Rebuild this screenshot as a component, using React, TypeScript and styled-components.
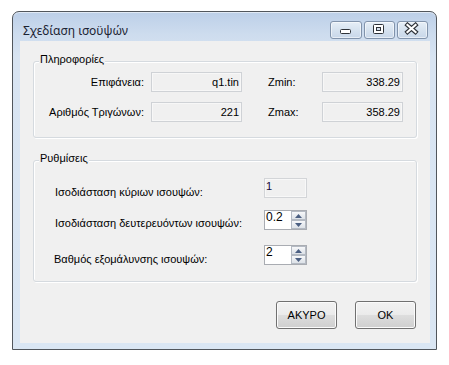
import React from "react";
import styled, { createGlobalStyle } from "styled-components";

const GlobalStyle = createGlobalStyle`
  html, body { margin: 0; padding: 0; background: #ffffff; }
  body {
    font-family: "Liberation Sans", Arial, sans-serif;
    font-size: 11px;
    color: #000;
  }
  * { box-sizing: border-box; }
`;

const Page = styled.div`
  padding: 11px 0 0 12px;
`;

const Window = styled.div`
  width: 425px;
  height: 339px;
  border: 1px solid #51565c;
  border-radius: 7px 7px 0 0;
  background: linear-gradient(180deg, #bccfe8 0px, #cddcee 22px, #d8e4f2 45px, #dae6f3 100%);
  box-shadow: inset 0 1px 0 rgba(255, 255, 255, 0.55);
  display: flex;
  flex-direction: column;
  padding: 0 6px 6px 7px;
`;

const TitleBar = styled.div`
  height: 29px;
  flex: none;
  display: flex;
  justify-content: space-between;
  align-items: flex-start;
`;

const Title = styled.div`
  padding: 11px 0 0 3px;
  font-family: "Noto Sans", "Open Sans", sans-serif;
  font-size: 12px;
  line-height: 16px;
  color: #1c2433;
  white-space: nowrap;
`;

const Captions = styled.div`
  display: flex;
  gap: 2px;
  margin: 9px 2px 0 0;
`;

const CapButton = styled.div<{ $w: number }>`
  width: ${(p) => p.$w}px;
  height: 18px;
  border: 1px solid #8193ab;
  border-radius: 3px;
  background: linear-gradient(180deg, #e6eef7 0%, #d6e2ef 50%, #c8d7e9 100%);
  box-shadow: inset 0 0 0 1px rgba(255, 255, 255, 0.55);
  display: flex;
  svg { display: block; }
`;

const Client = styled.div`
  flex: 1;
  background: #f0f0f0;
  padding: 20px 13px 0 13px;
  display: flex;
  flex-direction: column;
`;

const Group = styled.div<{ $h: number; $mt: number }>`
  position: relative;
  height: ${(p) => p.$h}px;
  margin-top: ${(p) => p.$mt}px;
  border: 1px solid #d5dadf;
  border-radius: 3px;
  box-shadow: inset 1px 1px 0 #ffffff, 1px 1px 0 #ffffff;
  flex: none;
`;

const Legend = styled.span`
  position: absolute;
  top: -9px;
  left: 5px;
  padding: 0 1px;
  background: #f0f0f0;
  line-height: 13px;
  white-space: nowrap;
`;

const InfoBody = styled.div`
  padding-top: 10px;
  display: flex;
  flex-direction: column;
  gap: 10px;
`;

const InfoRow = styled.div`
  display: flex;
  align-items: center;
  height: 20px;
`;

const Label = styled.span<{ $w: number; $align?: "left" | "right"; $ml?: number }>`
  flex: none;
  width: ${(p) => p.$w}px;
  margin-left: ${(p) => p.$ml ?? 0}px;
  text-align: ${(p) => p.$align ?? "left"};
  line-height: 13px;
  white-space: nowrap;
`;

const ReadBox = styled.div<{ $w: number; $ml?: number }>`
  flex: none;
  width: ${(p) => p.$w}px;
  height: 20px;
  margin-left: ${(p) => p.$ml ?? 0}px;
  border: 1px solid #cfd2d6;
  background: #f0f0f0;
  box-shadow: inset 0 0 0 1px #f7f7f7;
  text-align: right;
  padding: 0 2px;
  line-height: 18px;
  white-space: nowrap;
`;

const SettingsBody = styled.div`
  padding: 17px 0 0 21px;
  display: flex;
  flex-direction: column;
`;

const SettingRow = styled.div<{ $mt: number; $indent?: number }>`
  display: flex;
  align-items: flex-start;
  height: 20px;
  margin-top: ${(p) => p.$mt}px;
  margin-left: ${(p) => p.$indent ?? 0}px;
`;

const SettingLabel = styled.span<{ $w: number; $top: number }>`
  flex: none;
  width: ${(p) => p.$w}px;
  padding-top: ${(p) => p.$top}px;
  line-height: 13px;
  white-space: nowrap;
`;

const DisabledBox = styled.div`
  flex: none;
  width: 43px;
  height: 20px;
  border: 1px solid #d3d5d8;
  background: #f0f0f0;
  box-shadow: inset 0 0 0 1px #f8f8f8;
  padding: 1px 0 0 1px;
  line-height: 13px;
  color: #14083a;
`;

const SpinBox = styled.div`
  flex: none;
  width: 43px;
  height: 20px;
  border: 1px solid #a9acb2;
  background: #ffffff;
  display: flex;
`;

const SpinText = styled.div`
  flex: 1;
  padding: 0 0 0 1px;
  line-height: 13px;
  font-size: 12px;
`;

const SpinButtons = styled.div`
  flex: none;
  width: 15px;
  display: flex;
  flex-direction: column;
`;

const SpinButton = styled.div`
  flex: 1;
  border: 1px solid #b4bac3;
  background: linear-gradient(180deg, #f7f8fa 0%, #e9ecf0 50%, #dde2e8 100%);
  display: flex;
  align-items: center;
  justify-content: center;
  svg { display: block; }
`;

const ButtonRow = styled.div`
  display: flex;
  justify-content: flex-end;
  gap: 18px;
  margin: 19px 1px 0 0;
`;

const DlgButton = styled.div`
  width: 61px;
  height: 28px;
  border: 1px solid #707070;
  border-radius: 3px;
  background: linear-gradient(180deg, #f2f2f2 0%, #ebebeb 48%, #dddddd 52%, #cfcfcf 100%);
  box-shadow: inset 0 0 0 1px #fbfbfb;
  display: flex;
  align-items: center;
  justify-content: center;
  line-height: 13px;
`;

const GLYPH = "#2e3238";

const MinGlyph = () => (
  <svg width="30" height="16" viewBox="0 0 30 16">
    <rect x="9.5" y="7.5" width="10" height="4" rx="1" fill="#fff" stroke={GLYPH} />
  </svg>
);

const MaxGlyph = () => (
  <svg width="29" height="16" viewBox="0 0 29 16">
    <rect x="8.5" y="2.5" width="10" height="9" rx="1" fill="#fff" stroke={GLYPH} />
    <rect x="11.5" y="5.5" width="4" height="3" fill="#d4dfec" stroke={GLYPH} />
  </svg>
);

const CloseGlyph = () => (
  <svg width="29" height="16" viewBox="0 0 29 16">
    <path d="M9.5 3 L17.5 10 M17.5 3 L9.5 10" stroke={GLYPH} strokeWidth="4.4" strokeLinecap="square" fill="none" />
    <path d="M9.5 3 L17.5 10 M17.5 3 L9.5 10" stroke="#ffffff" strokeWidth="2.2" strokeLinecap="square" fill="none" />
  </svg>
);

const Arrow = ({ up }: { up?: boolean }) => (
  <svg width="7" height="4" viewBox="0 0 7 4">
    <path d={up ? "M0 4 L3.5 0 L7 4 Z" : "M0 0 L3.5 4 L7 0 Z"} fill="#4b5f82" />
  </svg>
);

const Spinner = ({ value }: { value: string }) => (
  <SpinBox>
    <SpinText>{value}</SpinText>
    <SpinButtons>
      <SpinButton>
        <Arrow up />
      </SpinButton>
      <SpinButton>
        <Arrow />
      </SpinButton>
    </SpinButtons>
  </SpinBox>
);

export default function App() {
  return (
    <>
      <GlobalStyle />
      <Page>
        <Window>
          <TitleBar>
            <Title>Σχεδίαση ισοϋψών</Title>
            <Captions>
              <CapButton $w={32}>
                <MinGlyph />
              </CapButton>
              <CapButton $w={31}>
                <MaxGlyph />
              </CapButton>
              <CapButton $w={31}>
                <CloseGlyph />
              </CapButton>
            </Captions>
          </TitleBar>
          <Client>
            <Group $h={77} $mt={0}>
              <Legend>Πληροφορίες</Legend>
              <InfoBody>
                <InfoRow>
                  <Label $w={110} $align="right">Επιφάνεια:</Label>
                  <ReadBox $w={91} $ml={7}>q1.tin</ReadBox>
                  <Label $w={54} $ml={26}>Zmin:</Label>
                  <ReadBox $w={81}>338.29</ReadBox>
                </InfoRow>
                <InfoRow>
                  <Label $w={110} $align="right">Αριθμός Τριγώνων:</Label>
                  <ReadBox $w={91} $ml={7}>221</ReadBox>
                  <Label $w={54} $ml={26}>Zmax:</Label>
                  <ReadBox $w={81}>358.29</ReadBox>
                </InfoRow>
              </InfoBody>
            </Group>
            <Group $h={122} $mt={22}>
              <Legend>Ρυθμίσεις</Legend>
              <SettingsBody>
                <SettingRow $mt={0}>
                  <SettingLabel $w={209} $top={8}>Ισοδιάσταση κύριων ισουψών:</SettingLabel>
                  <DisabledBox>1</DisabledBox>
                </SettingRow>
                <SettingRow $mt={12}>
                  <SettingLabel $w={209} $top={7}>Ισοδιάσταση δευτερευόντων ισουψών:</SettingLabel>
                  <Spinner value="0.2" />
                </SettingRow>
                <SettingRow $mt={15} $indent={-1}>
                  <SettingLabel $w={210} $top={8}>Βαθμός εξομάλυνσης ισουψών:</SettingLabel>
                  <Spinner value="2" />
                </SettingRow>
              </SettingsBody>
            </Group>
            <ButtonRow>
              <DlgButton>ΑΚΥΡΟ</DlgButton>
              <DlgButton>OK</DlgButton>
            </ButtonRow>
          </Client>
        </Window>
      </Page>
    </>
  );
}
